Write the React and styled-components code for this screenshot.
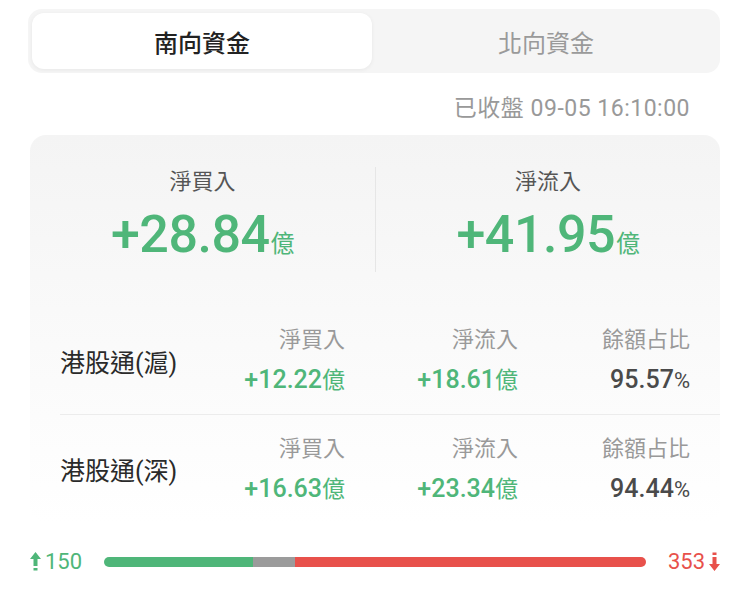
import React from 'react';
import styled, { createGlobalStyle } from 'styled-components';

const GlobalStyle = createGlobalStyle`
  html, body {
    margin: 0;
    padding: 0;
    background: #fff;
  }
  body {
    font-family: Roboto, "Noto Sans CJK TC", sans-serif;
    color: #222;
  }
`;

const GREEN = '#4fb679';
const RED = '#e8514b';

const rows = [
  { name: '港股通(滬)', buy: '+12.22', flow: '+18.61', ratio: '95.57' },
  { name: '港股通(深)', buy: '+16.63', flow: '+23.34', ratio: '94.44' },
];

const breadth = { up: 150, flat: 42, down: 353 };

function UpArrow() {
  return (
    <svg width="11" height="19" viewBox="0 0 11 19">
      <path d="M5.5 0 L11 7 H7.5 V14 H3.5 V7 H0 Z" fill={GREEN} />
      <rect x="3.5" y="16" width="4" height="2.5" fill={GREEN} />
    </svg>
  );
}

function DownArrow() {
  return (
    <svg width="11" height="19" viewBox="0 0 11 19">
      <rect x="3.5" y="0.5" width="4" height="2.5" fill={RED} />
      <path d="M5.5 19 L11 12 H7.5 V5 H3.5 V12 H0 Z" fill={RED} />
    </svg>
  );
}

export default function App() {
  const total = breadth.up + breadth.flat + breadth.down;
  return (
    <>
      <GlobalStyle />
      <Page>
        <Tabs>
          <Tab active>南向資金</Tab>
          <Tab>北向資金</Tab>
        </Tabs>
        <Stamp>已收盤 09-05 16:10:00</Stamp>
        <Card>
          <Summary>
            <Stat>
              <StatLabel>淨買入</StatLabel>
              <BigValue>+28.84<Unit>億</Unit></BigValue>
            </Stat>
            <Stat bordered>
              <StatLabel>淨流入</StatLabel>
              <BigValue>+41.95<Unit>億</Unit></BigValue>
            </Stat>
          </Summary>
          {rows.map((r, i) => (
            <Row key={r.name} last={i === rows.length - 1}>
              <Name>{r.name}</Name>
              <Cell>
                <CellLabel>淨買入</CellLabel>
                <CellValue>{r.buy}<SmallUnit>億</SmallUnit></CellValue>
              </Cell>
              <Cell>
                <CellLabel>淨流入</CellLabel>
                <CellValue>{r.flow}<SmallUnit>億</SmallUnit></CellValue>
              </Cell>
              <Cell>
                <CellLabel>餘額占比</CellLabel>
                <CellValue dark>{r.ratio}<Pct>%</Pct></CellValue>
              </Cell>
            </Row>
          ))}
        </Card>
        <Breadth>
          <Count color={GREEN}><UpArrow />150</Count>
          <Bar>
            <Seg color={GREEN} style={{ width: `${(breadth.up / total) * 100}%` }} />
            <Seg color="#9b9b9b" style={{ width: `${(breadth.flat / total) * 100}%` }} />
            <Seg color={RED} style={{ flex: 1 }} />
          </Bar>
          <Count color={RED}>353<DownArrow /></Count>
        </Breadth>
      </Page>
    </>
  );
}

const Page = styled.div`
  width: 750px;
  height: 608px;
  box-sizing: border-box;
  padding: 9px 30px 0 28px;
`;

const Tabs = styled.div`
  display: grid;
  grid-template-columns: 1fr 1fr;
  gap: 4px;
  height: 64px;
  box-sizing: border-box;
  padding: 4px;
  background: #f5f5f5;
  border-radius: 14px;
`;

const Tab = styled.div`
  display: flex;
  align-items: center;
  justify-content: center;
  font-size: 24px;
  border-radius: 12px;
  color: ${(p) => (p.active ? '#222' : '#9a9a9a')};
  font-weight: ${(p) => (p.active ? 500 : 400)};
  background: ${(p) => (p.active ? '#fff' : 'transparent')};
  box-shadow: ${(p) => (p.active ? '0 1px 4px rgba(0,0,0,0.06)' : 'none')};
`;

const Stamp = styled.div`
  text-align: right;
  padding-right: 30px;
  margin-top: 21px;
  font-size: 23px;
  line-height: 30px;
  letter-spacing: 0.5px;
  color: #999;
`;

const Card = styled.div`
  margin: 11px 0 0 2px;
  border-radius: 16px;
  background: linear-gradient(180deg, #f4f4f4 0%, #f9f9f9 45%, #fff 100%);
  padding: 0 0 0 30px;
`;

const Summary = styled.div`
  display: grid;
  grid-template-columns: 1fr 1fr;
  margin-left: -30px;
  padding: 32px 0 35px;
`;

const Stat = styled.div`
  display: flex;
  flex-direction: column;
  align-items: center;
  border-left: ${(p) => (p.bordered ? '1px solid #e6e6e6' : 'none')};
`;

const StatLabel = styled.div`
  font-size: 22px;
  line-height: 30px;
  color: #555;
`;

const BigValue = styled.div`
  margin-top: 10px;
  font-size: 52px;
  line-height: 56px;
  font-weight: 500;
  letter-spacing: -0.5px;
  color: ${GREEN};
`;

const Unit = styled.span`
  font-size: 24px;
  font-weight: 400;
  margin-left: 1px;
`;

const Row = styled.div`
  display: grid;
  grid-template-columns: 1fr 160px 173px 172px;
  align-items: center;
  height: 108px;
  padding-right: 30px;
  box-sizing: border-box;
  border-bottom: ${(p) => (p.last ? 'none' : '1px solid #ececec')};
`;

const Name = styled.div`
  font-size: 25px;
  color: #2a2a2a;
  white-space: nowrap;
`;

const Cell = styled.div`
  display: flex;
  flex-direction: column;
  align-items: flex-end;
  gap: 10px;
`;

const CellLabel = styled.div`
  font-size: 22px;
  line-height: 30px;
  color: #999;
`;

const CellValue = styled.div`
  font-size: 25px;
  line-height: 30px;
  font-weight: 500;
  color: ${(p) => (p.dark ? '#4a4a4a' : GREEN)};
`;

const SmallUnit = styled.span`
  font-size: 23px;
  font-weight: 400;
`;

const Pct = styled.span`
  font-size: 22px;
  font-weight: 400;
`;

const Breadth = styled.div`
  display: flex;
  align-items: center;
  gap: 22px;
  margin-top: 26px;
  padding-left: 2px;
`;

const Count = styled.div`
  display: flex;
  align-items: center;
  gap: 4px;
  font-size: 22px;
  color: ${(p) => p.color};
`;

const Bar = styled.div`
  flex: 1;
  display: flex;
  height: 10px;
  border-radius: 5px;
  overflow: hidden;
`;

const Seg = styled.div`
  height: 100%;
  background: ${(p) => p.color};
`;
